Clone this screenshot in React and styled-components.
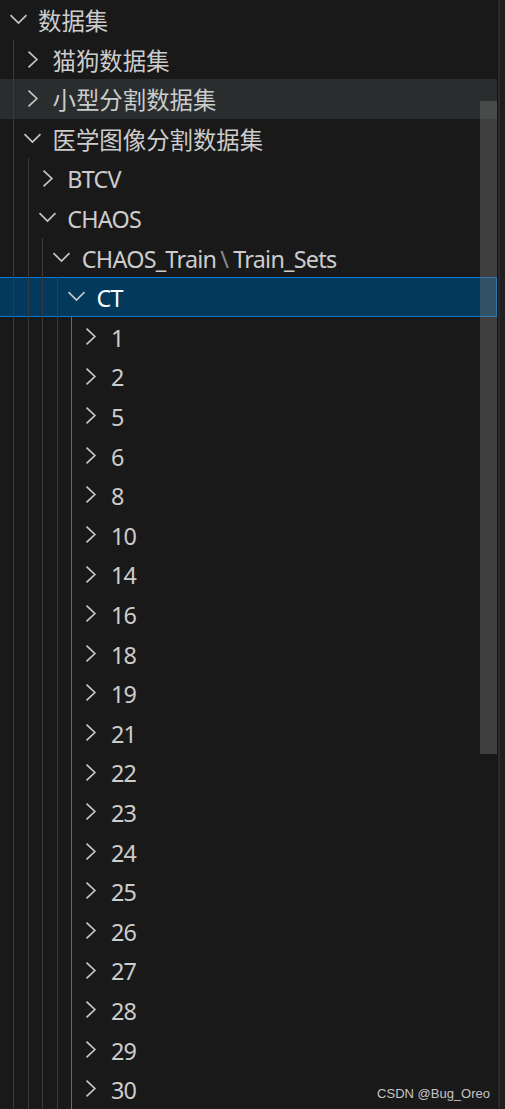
import React from "react";
import styled, { createGlobalStyle } from "styled-components";

const Global = createGlobalStyle`
  html, body { margin: 0; padding: 0; background: #191919; overflow: hidden; }
  #root { height: 1109px; }
`;

const Page = styled.div`
  position: relative;
  display: flex;
  width: 505px;
  height: 1109px;
  background: #191919;
  overflow: hidden;
  font-family: "Noto Sans", "Noto Sans CJK SC", sans-serif;
`;

const Sidebar = styled.div`
  position: relative;
  width: 497px;
  display: flex;
  flex-direction: column;
`;

const Divider = styled.div`
  width: 1px;
  background: #141414;
  & + & { width: 2px; background: #2b2b2b; }
`;

const Editor = styled.div`
  flex: 1;
  background: #1f1f1f;
`;

const Row = styled.div`
  box-sizing: border-box;
  display: flex;
  align-items: center;
  height: 39.6px;
  flex: none;
  background: ${(p) => (p.$selected ? "#04395e" : p.$hover ? "#2a2d2e" : "transparent")};
  border: ${(p) => (p.$selected ? "1px solid #0078d4" : "none")};
  border-left: none;
  color: ${(p) => (p.$selected ? "#ffffff" : "#cccccc")};
  font-size: 23.4px;
  white-space: nowrap;
`;

const Guide = styled.span`
  flex: none;
  align-self: stretch;
  width: 13px;
  margin-right: 0.6px;
  margin-top: ${(p) => (p.$selected ? "-1px" : "0")};
  margin-bottom: ${(p) => (p.$selected ? "-1px" : "0")};
  border-right: 1px solid ${(p) => (p.$active ? "#6a6a6a" : "#3a3a3a")};
`;

const Twistie = styled.span`
  flex: none;
  width: 36px;
  height: 100%;
  display: flex;
  align-items: center;
  justify-content: center;
  color: #c5c5c5;
`;

const Label = styled.span`
  margin-left: 2px;
  display: flex;
  align-items: center;
  line-height: 1;
  padding-top: 4px;
  letter-spacing: ${(p) => (p.$latin ? "-0.75px" : "0")};
`;

const Sep = styled.span`
  color: #8a8a8a;
  margin: 0 5px 0 4px;
`;

const Scrollbar = styled.div`
  position: absolute;
  right: 0;
  top: 101px;
  width: 17px;
  height: 653px;
  background: rgba(121, 121, 121, 0.4);
`;

const Watermark = styled.div`
  position: absolute;
  right: 15px;
  bottom: 8px;
  font-family: "Liberation Sans", Arial, sans-serif;
  font-size: 13px;
  color: rgba(230, 230, 230, 0.85);
`;

const Chevron = ({ open }) => (
  <svg width="29" height="29" viewBox="0 0 16 16" fill="none">
    {open ? (
      <polyline points="3.6,5.6 8,10 12.4,5.6" stroke="currentColor" strokeWidth="0.95" strokeLinejoin="miter" />
    ) : (
      <polyline points="5.8,3.6 10.4,8 5.8,12.4" stroke="currentColor" strokeWidth="0.95" strokeLinejoin="miter" />
    )}
  </svg>
);

const nums = [1, 2, 5, 6, 8, 10, 14, 16, 18, 19, 21, 22, 23, 24, 25, 26, 27, 28, 29, 30];

const rows = [
  { level: 0, open: true, label: "数据集" },
  { level: 1, open: false, label: "猫狗数据集" },
  { level: 1, open: false, label: "小型分割数据集", hover: true },
  { level: 1, open: true, label: "医学图像分割数据集" },
  { level: 2, open: false, label: "BTCV", latin: true },
  { level: 2, open: true, label: "CHAOS", latin: true },
  { level: 3, open: true, label: ["CHAOS_Train", "Train_Sets"], latin: true },
  { level: 4, open: true, label: "CT", selected: true, latin: true },
  ...nums.map((n) => ({ level: 5, open: false, label: String(n), latin: true })),
];

export default function App() {
  return (
    <Page>
      <Global />
      <Sidebar>
        {rows.map((r, i) => (
          <Row key={i} $selected={r.selected} $hover={r.hover}>
            {Array.from({ length: r.level }).map((_, k) => (
              <Guide key={k} $active={k === 4} $selected={r.selected} />
            ))}
            <Twistie>
              <Chevron open={r.open} />
            </Twistie>
            <Label $latin={r.latin}>
              {Array.isArray(r.label) ? (
                <>
                  {r.label[0]}
                  <Sep>\</Sep>
                  {r.label[1]}
                </>
              ) : (
                r.label
              )}
            </Label>
          </Row>
        ))}
        <Scrollbar />
      </Sidebar>
      <Divider />
      <Divider />
      <Editor />
      <Watermark>CSDN @Bug_Oreo</Watermark>
    </Page>
  );
}
